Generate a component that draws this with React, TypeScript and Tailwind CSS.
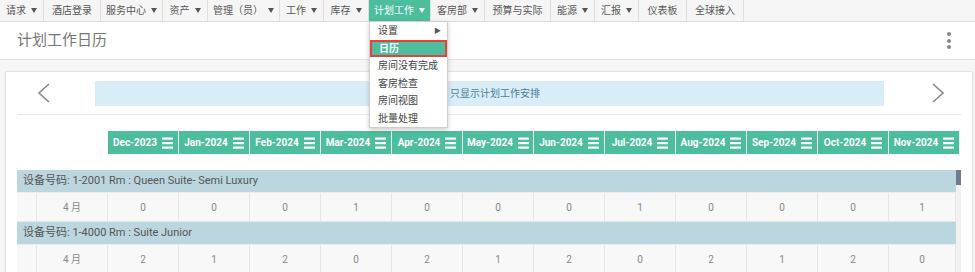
import { ReactNode } from "react";

const navItems = [
  { label: "请求", caret: true, w: "w-[44px]" },
  { label: "酒店登录", w: "w-[57px]" },
  { label: "服务中心", caret: true, w: "w-[62px]" },
  { label: "资产", caret: true, w: "w-[45px]" },
  { label: "管理（员）", caret: true, w: "w-[72px]" },
  { label: "工作", caret: true, w: "w-[44px]" },
  { label: "库存", caret: true, w: "w-[45px]" },
  { label: "计划工作", caret: true, w: "w-[62px]", active: true },
  { label: "客房部", caret: true, w: "w-[54px]" },
  { label: "预算与实际", w: "w-[66px]" },
  { label: "能源", caret: true, w: "w-[44px]" },
  { label: "汇报", caret: true, w: "w-[44px]" },
  { label: "仪表板", w: "w-[48px]" },
  { label: "全球接入", w: "w-[57px]" },
];

const menuItems = ["设置", "日历", "房间没有完成", "客房检查", "房间视图", "批量处理"];

const months = [
  "Dec-2023", "Jan-2024", "Feb-2024", "Mar-2024", "Apr-2024", "May-2024",
  "Jun-2024", "Jul-2024", "Aug-2024", "Sep-2024", "Oct-2024", "Nov-2024",
];

const rooms = [
  { title: "设备号码: 1-2001 Rm : Queen Suite- Semi Luxury", values: [0, 0, 0, 1, 0, 0, 0, 1, 0, 0, 0, 1] },
  { title: "设备号码: 1-4000 Rm : Suite Junior", values: [2, 1, 2, 0, 2, 1, 2, 0, 2, 1, 2, 0] },
];

function Caret() {
  return (
    <svg width="6" height="5" viewBox="0 0 6 5" className="ml-[5px]">
      <path d="M0 0h6L3 5z" fill="currentColor" />
    </svg>
  );
}

function Hamburger() {
  return (
    <svg width="11" height="12" viewBox="0 0 11 12">
      <rect x="0" y="0.5" width="11" height="2.2" fill="#fff" />
      <rect x="0" y="5" width="11" height="2.2" fill="#fff" />
      <rect x="0" y="9.5" width="11" height="2.2" fill="#fff" />
    </svg>
  );
}

function Chevron({ dir }: { dir: "left" | "right" }) {
  return (
    <svg width="13" height="20" viewBox="0 0 13 20">
      <path
        d={dir === "left" ? "M12 1L2 10l10 9" : "M1 1l10 9-10 9"}
        fill="none"
        stroke="#8a8a8a"
        strokeWidth="1.6"
      />
    </svg>
  );
}

function Dropdown() {
  return (
    <div className="absolute top-[21px] left-0 w-[79px] bg-white border border-[#cfcfcf] shadow-[0_2px_5px_rgba(0,0,0,0.2)] z-20 text-[10px] text-[#444]">
      {menuItems.map((m) =>
        m === "日历" ? (
          <div key={m} className="h-[17.5px] flex items-center pl-[7px] bg-[#4cbd9d] text-white font-bold border-2 border-[#e8403a]">
            {m}
          </div>
        ) : (
          <div key={m} className="h-[17.5px] flex items-center justify-between pl-[8px] pr-[6px]">
            {m}
            {m === "设置" && <span className="text-[7px] text-[#555]">▶</span>}
          </div>
        )
      )}
    </div>
  );
}

function Cell({ children, className = "" }: { children?: ReactNode; className?: string }) {
  return (
    <div className={`h-full flex items-center justify-center border-r border-[#e6e6e6] ${className}`}>
      {children}
    </div>
  );
}

export default function App() {
  return (
    <div
      className="w-[975px] h-[272px] overflow-hidden bg-[#f6f6f6] relative"
      style={{ fontFamily: 'Roboto, "Noto Sans CJK SC", sans-serif' }}
    >
      {/* top nav */}
      <div className="h-[22px] flex bg-[#f5f5f5] border-b border-[#dcdcdc] text-[10px] text-[#555]">
        {navItems.map((n) => (
          <div
            key={n.label}
            className={`relative ${n.w} h-full flex items-center justify-center border-r border-[#dedede] ${
              n.active ? "bg-[#4cbd9d] text-white" : ""
            }`}
          >
            {n.label}
            {n.caret && <Caret />}
            {n.active && <Dropdown />}
          </div>
        ))}
      </div>

      {/* page header */}
      <div className="h-[38px] bg-white border-b border-[#e3e3e3] flex items-center justify-between pl-[17px] pr-[24px]">
        <span className="text-[15px] text-[#777]">计划工作日历</span>
        <div className="flex flex-col gap-[2.5px]">
          <span className="w-[4px] h-[4px] rounded-full bg-[#888]" />
          <span className="w-[4px] h-[4px] rounded-full bg-[#888]" />
          <span className="w-[4px] h-[4px] rounded-full bg-[#888]" />
        </div>
      </div>

      {/* card */}
      <div className="pt-[11px] pl-[5px] pr-[2px]">
        <div className="bg-white border border-[#e2e2e2] rounded-[2px] shadow-[0_1px_2px_rgba(0,0,0,0.08)] px-[11px] h-[220px]">
          <div className="h-[43px] flex items-center border-b border-[#e8e8e8]">
            <div className="w-[78px] pl-[20px] flex items-center">
              <Chevron dir="left" />
            </div>
            <div className="w-[789px] h-[25px] bg-[#d9edf7] flex items-center pl-[355px] text-[10px] text-[#4a7d99]">
              只显示计划工作安排
            </div>
            <div className="flex-1 flex justify-end pr-[16px]">
              <Chevron dir="right" />
            </div>
          </div>

          {/* month header */}
          <div className="mt-[16px] ml-[91px] flex h-[23px]">
            {months.map((m) => (
              <div
                key={m}
                className="w-[71px] shrink-0 bg-[#4cbd9d] border-r border-[#e9f6f2] flex items-center justify-center gap-[5px] text-white text-[10px] font-bold"
              >
                {m}
                <Hamburger />
              </div>
            ))}
          </div>

          {/* rows */}
          <div className="mt-[16px] flex">
            <div className="w-[940px]">
              {rooms.map((r) => (
                <div key={r.title}>
                  <div className="h-[23px] bg-[#bcd6e0] border-b border-[#e6eef1] flex items-center pl-[6px] text-[11px] text-[#555]">
                    {r.title}
                  </div>
                  <div className="h-[29px] bg-[#f8f8f8] border-b border-[#e6e6e6] flex text-[10px] text-[#888]">
                    <Cell className="w-[20px]" />
                    <Cell className="w-[71px]">4 月</Cell>
                    {r.values.map((v, i) => (
                      <Cell key={i} className={i === 11 ? "flex-1" : "w-[71px]"}>
                        {v}
                      </Cell>
                    ))}
                  </div>
                </div>
              ))}
            </div>
            <div className="w-[5px] bg-[#f1f1f1]">
              <div className="h-[15px] bg-[#6d7d8d]" />
            </div>
          </div>
        </div>
      </div>
    </div>
  );
}
